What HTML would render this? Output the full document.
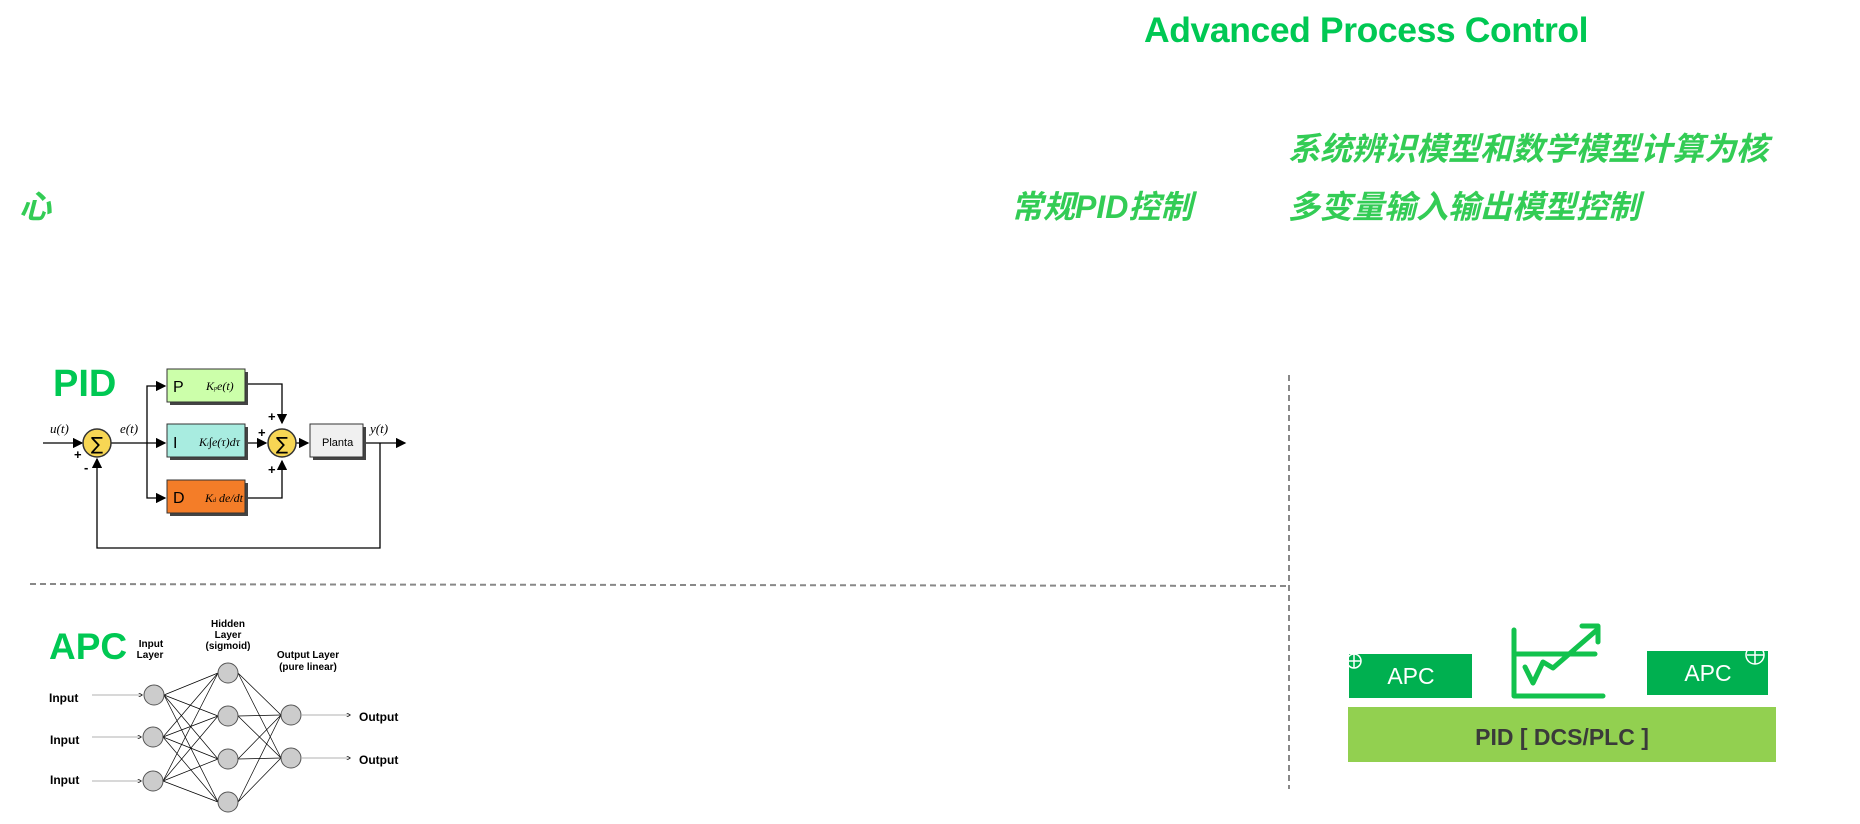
<!DOCTYPE html>
<html><head><meta charset="utf-8"><style>
html,body{margin:0;padding:0;background:#fff;}
body{width:1860px;height:824px;position:relative;overflow:hidden;font-family:"Liberation Sans","Noto Sans CJK SC",sans-serif;}
.a{position:absolute;white-space:nowrap;}
.cn{color:#33cc55;font-style:italic;font-weight:bold;font-size:32px;line-height:32px;font-family:"Liberation Sans","Noto Sans CJK SC",sans-serif;}
.big{color:#00c853;font-weight:bold;font-size:38px;line-height:40px;}
</style></head><body>
<div class="a" style="left:1144px;top:10px;color:#00c853;font-weight:bold;font-size:35.5px;line-height:40px;letter-spacing:-0.4px;">Advanced Process Control</div>
<div class="a cn" style="left:1288px;top:133px;">系统辨识模型和数学模型计算为核</div>
<div class="a cn" style="left:19px;top:191px;">心</div>
<div class="a cn" style="left:1011px;top:191px;">常规PID控制</div>
<div class="a cn" style="left:1288px;top:191px;">多变量输入输出模型控制</div>
<div class="a big" style="left:53px;top:364px;">PID</div>
<div class="a big" style="left:49px;top:627px;font-size:37px;">APC</div>

<svg class="a" style="left:0;top:0" width="1860" height="824">
<line x1="30" y1="584" x2="1289" y2="586" stroke="#888" stroke-width="2" stroke-dasharray="6,4"/>
<line x1="1289" y1="375" x2="1289" y2="789" stroke="#888" stroke-width="2" stroke-dasharray="6,4"/>
<defs><marker id="ar" markerWidth="8" markerHeight="8" refX="7" refY="4" orient="auto"><path d="M0,0 L8,4 L0,8 z" fill="#000"/></marker>
<marker id="as" markerWidth="6" markerHeight="6" refX="5" refY="3" orient="auto"><path d="M0,0 L6,3 L0,6" fill="none" stroke="#000"/></marker></defs>
<g stroke="#000" stroke-width="1.3" fill="none">
<line x1="43" y1="443" x2="82" y2="443" marker-end="url(#ar)"/>
<line x1="111" y1="443" x2="165" y2="443" marker-end="url(#ar)"/>
<polyline points="147,443 147,386 165,386" marker-end="url(#ar)"/>
<polyline points="147,443 147,498 165,498" marker-end="url(#ar)"/>
<polyline points="245,384 282,384 282,423" marker-end="url(#ar)"/>
<line x1="245" y1="443" x2="266" y2="443" marker-end="url(#ar)"/>
<polyline points="245,498 282,498 282,461" marker-end="url(#ar)"/>
<line x1="296" y1="443" x2="308" y2="443" marker-end="url(#ar)"/>
<line x1="363" y1="443" x2="405" y2="443" marker-end="url(#ar)"/>
<polyline points="380,443 380,548 97,548 97,459" marker-end="url(#ar)"/>
</g>
<g font-family="Liberation Serif" font-style="italic" font-size="13">
<text x="50" y="433">u(t)</text><text x="120" y="433">e(t)</text><text x="370" y="433">y(t)</text></g>
<g font-family="Liberation Sans" font-weight="bold" font-size="13"><text x="74" y="459">+</text><text x="84" y="472">-</text><text x="268" y="421">+</text><text x="258" y="437">+</text><text x="268" y="474">+</text></g>
<circle cx="97" cy="443" r="14" fill="#f7d654" stroke="#333" stroke-width="1.5"/>
<circle cx="282" cy="443" r="14" fill="#f7d654" stroke="#333" stroke-width="1.5"/>
<text x="91" y="450" font-size="18" font-family="DejaVu Sans">∑</text>
<text x="276" y="450" font-size="18" font-family="DejaVu Sans">∑</text>
<rect x="170" y="372" width="78" height="33" fill="#444"/><rect x="167" y="369" width="78" height="33" fill="#ccffaa" stroke="#333"/>
<rect x="170" y="427" width="78" height="33" fill="#444"/><rect x="167" y="424" width="78" height="33" fill="#a8ece0" stroke="#333"/>
<rect x="170" y="483" width="78" height="33" fill="#444"/><rect x="167" y="480" width="78" height="33" fill="#f47d28" stroke="#333"/>
<rect x="313" y="427" width="53" height="33" fill="#444"/><rect x="310" y="424" width="53" height="33" fill="#f0f0f0" stroke="#333"/>
<g font-family="Liberation Sans" font-size="16"><text x="173" y="392">P</text><text x="173" y="448">I</text><text x="173" y="503">D</text></g>
<text x="322" y="446" font-size="11" font-family="Liberation Sans">Planta</text>
<g font-family="Liberation Serif" font-style="italic" font-size="12"><text x="206" y="390">K<tspan font-size="6">p</tspan>e(t)</text><text x="199" y="446">K<tspan font-size="6">i</tspan>∫e(τ)dτ</text><text x="205" y="502">K<tspan font-size="6">d</tspan> de/dt</text></g>

<g stroke="#000" stroke-width="0.7" fill="none">
<line x1="164" y1="695" x2="218" y2="673"/><line x1="164" y1="695" x2="218" y2="716"/><line x1="164" y1="695" x2="218" y2="759"/><line x1="164" y1="695" x2="218" y2="802"/>
<line x1="163" y1="737" x2="218" y2="673"/><line x1="163" y1="737" x2="218" y2="716"/><line x1="163" y1="737" x2="218" y2="759"/><line x1="163" y1="737" x2="218" y2="802"/>
<line x1="163" y1="781" x2="218" y2="673"/><line x1="163" y1="781" x2="218" y2="716"/><line x1="163" y1="781" x2="218" y2="759"/><line x1="163" y1="781" x2="218" y2="802"/>
<line x1="238" y1="673" x2="281" y2="715"/><line x1="238" y1="673" x2="281" y2="758"/><line x1="238" y1="716" x2="281" y2="715"/><line x1="238" y1="716" x2="281" y2="758"/>
<line x1="238" y1="759" x2="281" y2="715"/><line x1="238" y1="759" x2="281" y2="758"/><line x1="238" y1="802" x2="281" y2="715"/><line x1="238" y1="802" x2="281" y2="758"/>
<g stroke="#999"><line x1="92" y1="695" x2="142" y2="695" marker-end="url(#as)"/><line x1="92" y1="737" x2="141" y2="737" marker-end="url(#as)"/><line x1="92" y1="781" x2="141" y2="781" marker-end="url(#as)"/>
<line x1="302" y1="715" x2="350" y2="715" marker-end="url(#as)"/><line x1="302" y1="758" x2="350" y2="758" marker-end="url(#as)"/></g>
</g>
<g fill="#ccc" stroke="#555" stroke-width="1">
<circle cx="154" cy="695" r="10"/><circle cx="153" cy="737" r="10"/><circle cx="153" cy="781" r="10"/>
<circle cx="228" cy="673" r="10"/><circle cx="228" cy="716" r="10"/><circle cx="228" cy="759" r="10"/><circle cx="228" cy="802" r="10"/>
<circle cx="291" cy="715" r="10"/><circle cx="291" cy="758" r="10"/></g>
<g font-family="Liberation Sans" font-weight="bold" font-size="12">
<text x="49" y="702">Input</text><text x="50" y="744">Input</text><text x="50" y="784">Input</text>
<text x="359" y="721">Output</text><text x="359" y="764">Output</text></g>
<g font-family="Liberation Sans" font-weight="bold" font-size="10" text-anchor="middle">
<text x="151" y="647">Input</text><text x="150" y="658">Layer</text>
<text x="228" y="627">Hidden</text><text x="228" y="638">Layer</text><text x="228" y="649">(sigmoid)</text>
<text x="308" y="658">Output Layer</text><text x="308" y="670">(pure linear)</text></g>

<rect x="1348" y="707" width="428" height="55" fill="#92d050"/>
<text x="1562" y="745" text-anchor="middle" font-family="Liberation Sans" font-weight="bold" font-size="23" fill="#3a3a3a">PID [ DCS/PLC ]</text>
<rect x="1349" y="654" width="123" height="44" fill="#00b050"/>
<text x="1411" y="684" text-anchor="middle" font-family="Liberation Sans" font-size="23" fill="#fff">APC</text>
<rect x="1647" y="651" width="121" height="44" fill="#00b050"/>
<text x="1708" y="681" text-anchor="middle" font-family="Liberation Sans" font-size="23" fill="#fff">APC</text>
<g stroke="#fff" stroke-width="1.5" fill="none"><circle cx="1354" cy="661" r="7"/><line x1="1348" y1="661" x2="1361" y2="661"/><line x1="1354" y1="654" x2="1354" y2="668"/>
<circle cx="1755" cy="655" r="9"/><line x1="1747" y1="655" x2="1764" y2="655"/><line x1="1755" y1="646" x2="1755" y2="664"/></g>
<g stroke="#12c24d" stroke-width="5" fill="none" stroke-linecap="round" stroke-linejoin="round">
<polyline points="1514,630 1514,696 1603,696"/><line x1="1514" y1="654" x2="1595" y2="654"/>
<polyline points="1525,667 1533,683 1543,662 1553,668 1598,629"/><polyline points="1582,626 1598,626 1598,642"/></g>
</svg>
</body></html>
